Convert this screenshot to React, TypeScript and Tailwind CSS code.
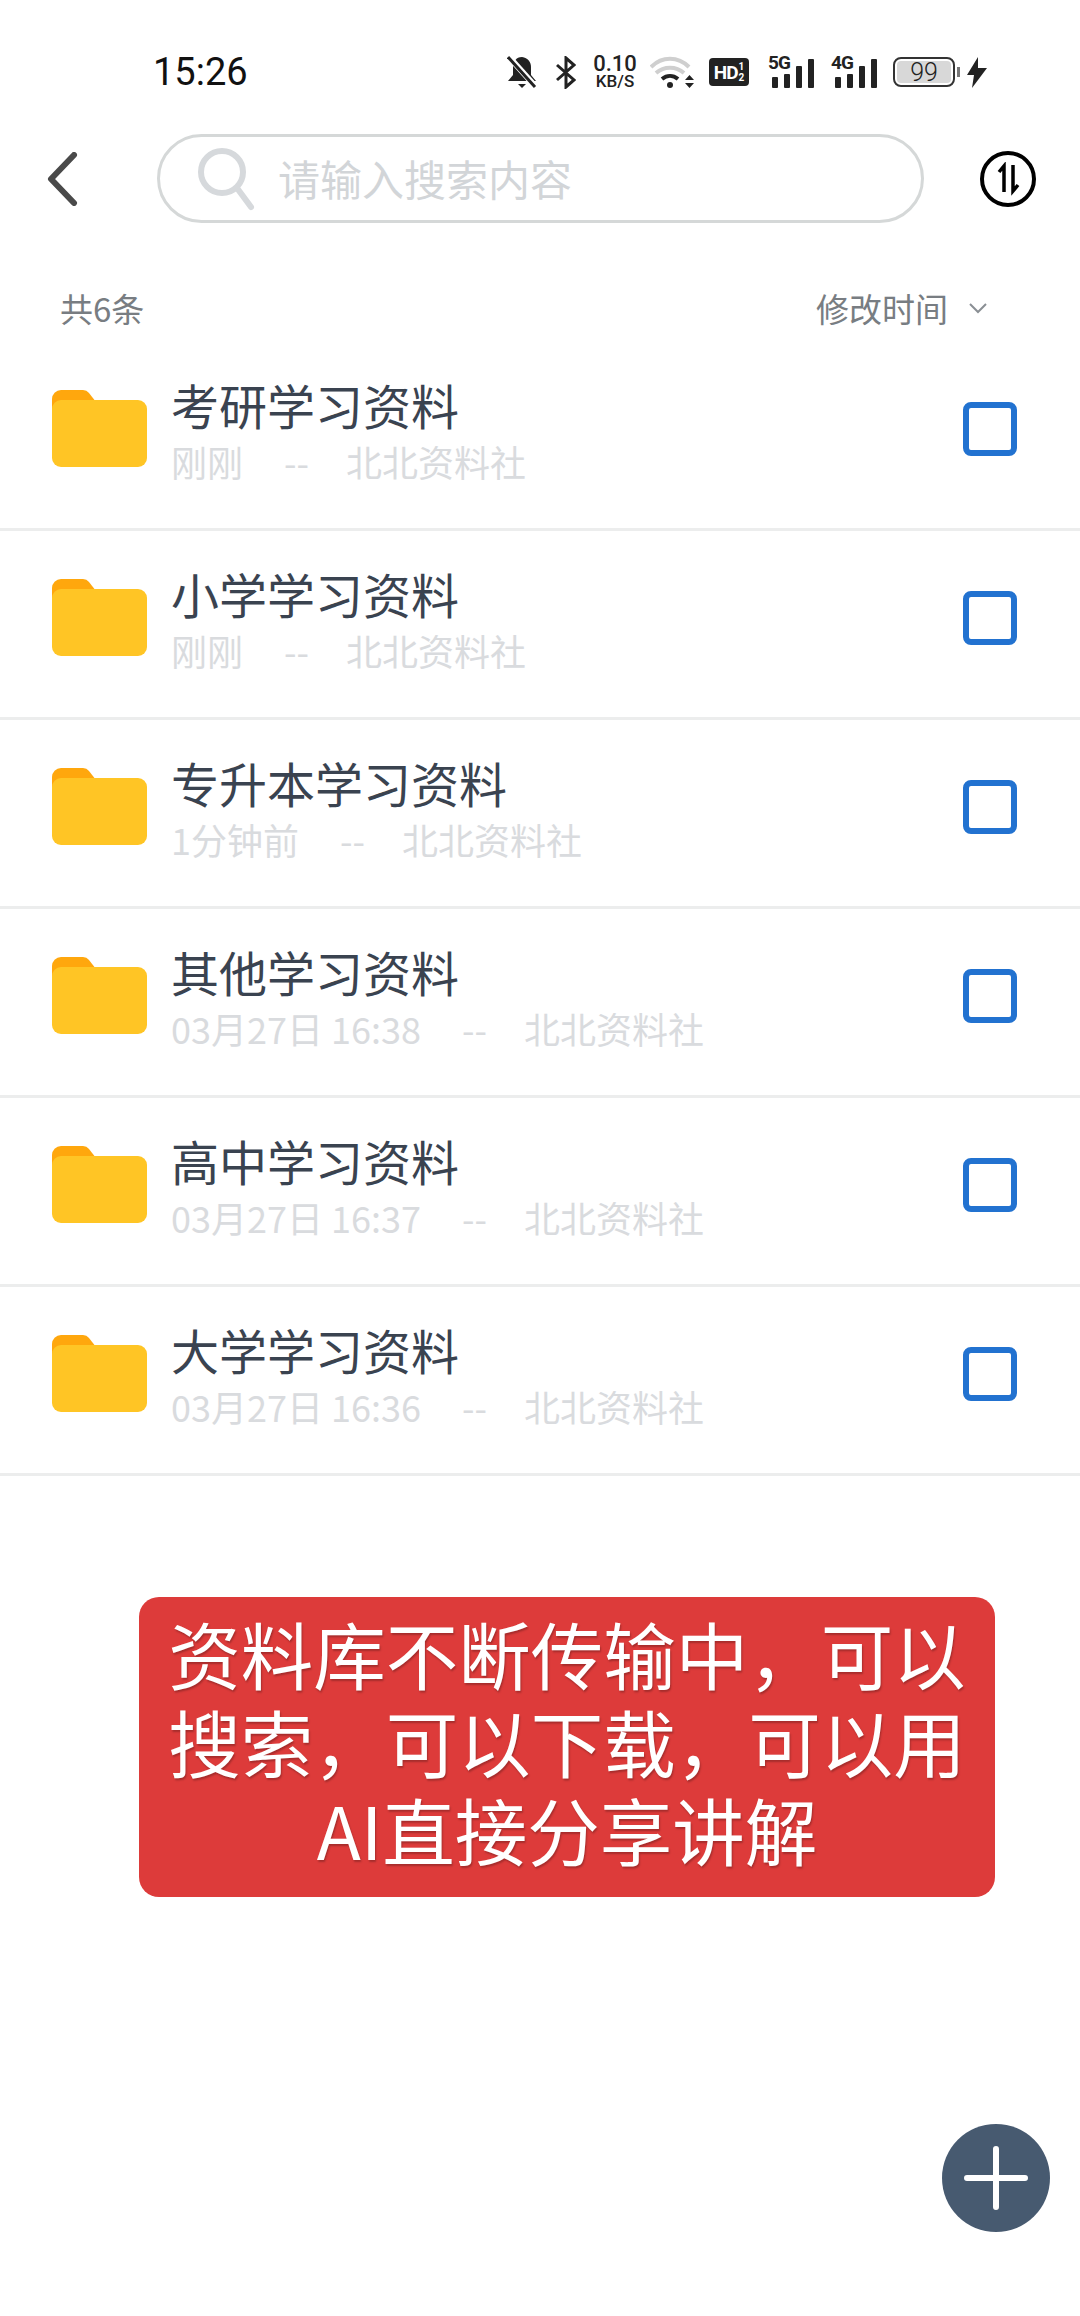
import React from "react";

const font = { fontFamily: '"Noto Sans CJK SC", "Noto Sans", sans-serif' };
const roboto = { fontFamily: '"Roboto", sans-serif' };

function Folder() {
  return (
    <svg width="95" height="77" viewBox="0 0 95 77" className="mb-[2px] shrink-0">
      <path d="M0 9a9 9 0 0 1 9-9h22a8 8 0 0 1 6 3l7 9v14H0z" fill="#ffa70d" />
      <rect x="0" y="10" width="95" height="67" rx="9" fill="#ffc525" />
    </svg>
  );
}

function Row({ title, time }: { title: string; time: string }) {
  return (
    <div className="flex h-[189px] items-center border-b-[3px] border-[#eceded] pb-[12px] pl-[52px] pr-[63px]">
      <Folder />
      <div className="ml-[24px] flex min-w-0 flex-1 flex-col">
        <div className="text-[48px] leading-[60px] text-[#3a4350]">{title}</div>
        <div className="mt-[3px] flex text-[36px] leading-[48px] text-[#d9dbde]">
          <span>{time}</span>
          <span className="ml-[41px]">--</span>
          <span className="ml-[37px]">北北资料社</span>
        </div>
      </div>
      <div className="h-[54px] w-[54px] rounded-[8px] border-[6px] border-[#2272d0]" />
    </div>
  );
}

function Signal({ label, pad, className }: { label: string; pad: string; className: string }) {
  return (
    <div className={className}>
      <span className="absolute left-0 top-[-3px] text-[19px] font-bold leading-none tracking-[-1px] text-[#222]" style={roboto}>{label}</span>
      <div className={pad}>
        <div className="h-[11px] w-[6px] rounded-[1px] bg-[#222]" />
        <div className="h-[14px] w-[6px] rounded-[1px] bg-[#222]" />
        <div className="h-[22px] w-[6px] rounded-[1px] bg-[#222]" />
        <div className="h-[29px] w-[6px] rounded-[1px] bg-[#222]" />
      </div>
    </div>
  );
}

function StatusBar() {
  return (
    <div className="flex h-[128px] items-center justify-between pl-[153px] pr-[93px] pt-[16px]">
      <div className="text-[38px] font-normal leading-none text-[#111]" style={roboto}>15:26</div>
      <div className="flex items-center text-[#222]">
        <svg width="30" height="33" viewBox="0 0 30 33" className="mr-[19px]">
          <path d="M15 1c-6 0-9 5-9 10v8l-5 6h28l-5-6v-8c0-5-3-9-9-10z" fill="#222" />
          <path d="M11 28h8l-4 4z" fill="#222" />
          <path d="M2 1l27 30" stroke="#fff" strokeWidth="6" />
          <path d="M1 1l27 30" stroke="#222" strokeWidth="3" />
        </svg>
        <svg width="20" height="33" viewBox="0 0 20 33" fill="none" stroke="#222" strokeWidth="3" className="mr-[17px]">
          <path d="M1 9l17 15-8 7V2l8 7-17 15" />
        </svg>
        <div className="mr-[13px] flex w-[44px] flex-col items-center font-medium text-[#222]" style={roboto}>
          <span className="text-[22px] leading-[19px]">0.10</span>
          <span className="text-[17px] leading-[17px]">KB/S</span>
        </div>
        <svg width="45" height="33" viewBox="0 0 45 33" fill="none" className="mr-[14px]">
          <path d="M1 11c11-11 27-11 38 0" stroke="#cfcfcf" strokeWidth="4" />
          <path d="M6 17c8-7 20-7 28 0" stroke="#cfcfcf" strokeWidth="4" />
          <path d="M12 23c5-4 11-4 16 0" stroke="#222" strokeWidth="4" />
          <circle cx="20" cy="29" r="3" fill="#222" />
          <path d="M35 24l4.500-5 4.500 5zM35 27l4.500 5 4.500-5z" fill="#222" />
        </svg>
        <div className="mr-[19px] flex h-[28px] w-[40px] items-center justify-center rounded-[4px] bg-[#222] text-white" style={roboto}>
          <span className="text-[19px] font-bold leading-none tracking-[-1px]">HD</span>
          <span className="ml-[1px] flex flex-col items-center text-[10px] font-bold leading-[11px]">
            <span>1</span>
            <span>2</span>
          </span>
        </div>
        <Signal label="5G" className="relative mr-[18px] h-[32px] w-[45px]" pad="absolute bottom-0 left-[4px] flex items-end gap-[6px]" />
        <Signal label="4G" className="relative mr-[16px] h-[32px] w-[46px]" pad="absolute bottom-0 left-[4px] flex items-end gap-[6px]" />
        <div className="relative mr-[12px] flex h-[30px] w-[62px] items-center justify-center rounded-[8px] border-[2px] border-[#333] p-[2px]">
          <div className="flex h-full w-full items-center justify-center rounded-[4px] bg-[#d8d8d8] text-[25px] font-light leading-none text-[#222]" style={roboto}>99</div>
          <div className="absolute right-[-7px] top-[8px] h-[10px] w-[3px] bg-[#777]" />
        </div>
        <svg width="20" height="31" viewBox="0 0 20 31">
          <path d="M11 0L0 18h7L5 31 20 11h-9z" fill="#222" />
        </svg>
      </div>
    </div>
  );
}

export default function App() {
  return (
    <div className="relative flex h-[2316px] w-[1080px] flex-col overflow-hidden bg-white" style={font}>
      <StatusBar />
      <div className="flex h-[102px] items-center pl-[46px] pr-[44px]">
        <svg width="32" height="54" viewBox="0 0 32 54" fill="none" className="shrink-0">
          <path d="M28 3L5 27l23 24" stroke="#4a4a4a" strokeWidth="6" strokeLinecap="round" strokeLinejoin="round" />
        </svg>
        <div className="mb-[2px] ml-[79px] flex h-[89px] w-[767px] items-center rounded-[45px] border-[3px] border-[#d5d8d8] pl-[34px]">
          <svg width="66" height="66" viewBox="0 0 66 66" fill="none" className="shrink-0">
            <circle cx="28" cy="27" r="21" stroke="#d6d9dc" strokeWidth="6" />
            <path d="M43 43l14 19" stroke="#d6d9dc" strokeWidth="6" strokeLinecap="round" />
          </svg>
          <span className="ml-[18px] text-[42px] leading-none text-[#d2d5d8]">请输入搜索内容</span>
        </div>
        <div className="ml-auto flex h-[56px] w-[56px] items-center justify-center rounded-full border-[4px] border-black">
          <svg width="28" height="34" viewBox="0 0 28 34" fill="none" stroke="#000" strokeWidth="3.5">
            <path d="M5 10l5-6v26" />
            <path d="M19 3v26l5-6" />
          </svg>
        </div>
      </div>
      <div className="mt-[50px] flex h-[56px] items-center justify-between pl-[60px] pr-[92px]">
        <span className="text-[33px] leading-none text-[#787d82]">共6条</span>
        <div className="flex items-center">
          <span className="text-[33px] leading-none text-[#787d82]">修改时间</span>
          <svg width="20" height="14" viewBox="0 0 20 14" fill="none" className="ml-[20px]">
            <path d="M2 3l8 8 8-8" stroke="#8a8f94" strokeWidth="2" />
          </svg>
        </div>
      </div>
      <div className="mt-[6px] flex flex-col">
        <Row title="考研学习资料" time="刚刚" />
        <Row title="小学学习资料" time="刚刚" />
        <Row title="专升本学习资料" time="1分钟前" />
        <Row title="其他学习资料" time="03月27日 16:38" />
        <Row title="高中学习资料" time="03月27日 16:37" />
        <Row title="大学学习资料" time="03月27日 16:36" />
      </div>
      <div className="ml-[139px] mt-[121px] flex h-[300px] w-[856px] flex-col items-center justify-center rounded-[20px] bg-[#dd3b3a] pb-[12px] text-center text-[72.500px] leading-[88px] text-white [text-shadow:1px_2px_2px_rgba(0,0,0,0.25)]">
        <span>资料库不断传输中，可以</span>
        <span>搜索，可以下载，可以用</span>
        <span>AI直接分享讲解</span>
      </div>
      <div className="absolute left-[942px] top-[2124px] flex h-[108px] w-[108px] items-center justify-center rounded-full bg-[#475a70]">
        <svg width="64" height="64" viewBox="0 0 64 64" stroke="#fff" strokeWidth="6" strokeLinecap="round">
          <path d="M32 3v58M3 32h58" />
        </svg>
      </div>
    </div>
  );
}
